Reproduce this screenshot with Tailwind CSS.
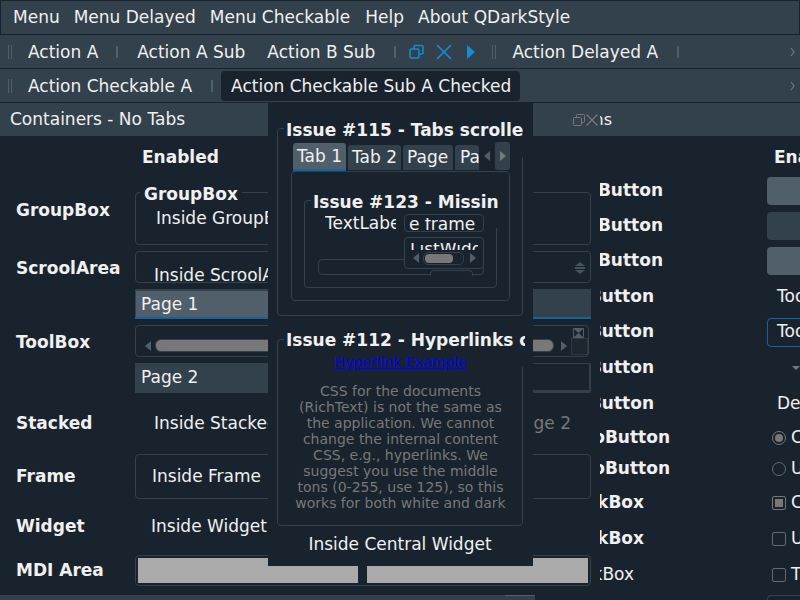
<!DOCTYPE html>
<html lang="en">
<head>
  <meta charset="UTF-8">
  <title>QDarkStyle Example</title>
  <script src="https://cdn.jsdelivr.net/npm/@tailwindcss/browser@4"></script>
</head>
<body class="w-[800px] h-[600px] overflow-hidden bg-[#19232D] text-[#F0F0F0] text-[17px] font-['DejaVu_Sans',sans-serif]">
  <div class="relative w-[800px] h-[600px] overflow-hidden whitespace-nowrap">
    <!-- Menu bar -->
    <div class="h-[35px] bg-[#32414B] border border-[#19232D] flex items-center pl-[12px] gap-[14px]">
      <span>Menu</span><span>Menu Delayed</span><span>Menu Checkable</span><span class="ml-[1px]">Help</span><span>About QDarkStyle</span>
    </div>

    <!-- Toolbar 1 -->
    <div class="h-[34px] bg-[#32414B] border-b border-[#19232D] flex items-center relative">
      <div class="ml-[8px] w-[4px] h-[14px] border-x border-[#505F69]"></div>
      <span class="ml-[16px] pt-[2px]">Action A</span>
      <div class="ml-[18px] w-[2px] h-[12px] bg-[#505F69]"></div>
      <span class="ml-[19px] pt-[2px]">Action A Sub</span>
      <span class="ml-[22px] pt-[2px]">Action B Sub</span>
      <div class="ml-[19px] w-[2px] h-[12px] bg-[#505F69]"></div>
      <svg class="ml-[13px]" width="16" height="16" viewBox="0 0 16 16" fill="none" stroke="#148CD2" stroke-width="1.5"><rect x="1" y="5" width="9" height="9" rx="1.5"/><path d="M5 5V2.500q0-1 1-1h7q1 0 1 1V9q0 1-1 1h-3"/></svg>
      <svg class="ml-[11px]" width="16" height="16" viewBox="0 0 16 16" fill="none" stroke="#148CD2" stroke-width="1.6"><path d="M1 1l14 14M15 1L1 15"/></svg>
      <svg class="ml-[14px]" width="10" height="14" viewBox="0 0 10 14"><path d="M1 0l8 7-8 7z" fill="#148CD2"/></svg>
      <div class="ml-[16px] w-[4px] h-[14px] border-x border-[#505F69]"></div>
      <span class="ml-[16px] pt-[2px]">Action Delayed A</span>
      <div class="ml-[19px] w-[2px] h-[12px] bg-[#505F69]"></div>
      <svg class="absolute left-[790px] top-[12px]" width="5" height="10" viewBox="0 0 5 10" fill="none" stroke="#787878" stroke-width="1.2"><path d="M1 1l3 4-3 4"/></svg>
    </div>

    <!-- Toolbar 2 -->
    <div class="h-[34px] bg-[#32414B] border-b border-[#19232D] flex items-center relative">
      <div class="ml-[8px] w-[4px] h-[14px] border-x border-[#505F69]"></div>
      <span class="ml-[16px] pt-[2px]">Action Checkable A</span>
      <div class="ml-[19px] w-[2px] h-[12px] bg-[#505F69]"></div>
      <span class="ml-[8px] h-[30px] pl-[10px] pr-[9px] pt-[2px] flex items-center rounded-[4px] bg-[#19232D]">Action Checkable Sub A Checked</span>
      <svg class="absolute left-[790px] top-[12px]" width="5" height="10" viewBox="0 0 5 10" fill="none" stroke="#787878" stroke-width="1.2"><path d="M1 1l3 4-3 4"/></svg>
    </div>

    <!-- Dock titles -->
    <div class="h-[33px] flex">
      <div class="w-[268px] bg-[#32414B] pl-[10px] pt-[1px] flex items-center">Containers - No Tabs</div>
      <div class="w-[265px]"></div>
      <div class="flex-1 bg-[#32414B] flex items-center relative">
        <svg class="absolute left-[40px] top-[11px]" width="12" height="12" viewBox="0 0 12 12" fill="none" stroke="#787878" stroke-width="1"><rect x="0.5" y="3.500" width="8" height="8" rx="1"/><path d="M3.500 3.500v-2q0-1 1-1h6q1 0 1 1v6q0 1-1 1h-2"/></svg>
        <svg class="absolute left-[53px] top-[11px]" width="12" height="12" viewBox="0 0 12 12" fill="none" stroke="#787878" stroke-width="1.2"><path d="M0.500 0.500l11 11M11.500 0.500l-11 11"/></svg>
        <div class="absolute left-[67px] w-[12px] overflow-hidden flex justify-end text-[16px]"><span>Buttons</span></div>
      </div>
    </div>

    <!-- Containers dock -->
    <div class="absolute left-0 top-[136px] w-[600px] h-[459px]">
      <div class="grid grid-cols-[135px_456px] grid-rows-[56px_53px_6px_32px_6px_104px_2px_57px_2px_45px_6px_43px_7px_31px]">
        <div class="col-span-2 pl-[142px] pt-[9px] font-bold">Enabled</div>

        <div class="pl-[16px] pt-[6px] font-bold">GroupBox</div>
        <div class="relative border border-[#32414B] rounded-[4px]">
          <span class="absolute left-[4px] -top-[9px] px-[4px] bg-[#19232D] font-bold leading-[20px]">GroupBox</span>
          <span class="absolute left-[20px] top-[15px] leading-[20px]">Inside GroupBox</span>
        </div>
        <div class="col-span-2"></div>

        <div class="pl-[16px] pt-[4px] font-bold flex items-center">ScroolArea</div>
        <div class="relative border border-[#32414B] rounded-[4px] overflow-hidden">
          <span class="absolute left-[18px] top-[13px] leading-[20px]">Inside ScroolArea</span>
          <svg class="absolute right-[4px] top-[10px]" width="12" height="12" viewBox="0 0 12 12"><path d="M6 0l5 4H1zM1 5h10v2H1zM1 8h10l-5 4z" fill="#455560"/></svg>
        </div>
        <div class="col-span-2"></div>

        <div class="pl-[16px] pt-[4px] font-bold flex items-center">ToolBox</div>
        <div class="relative">
          <div class="absolute left-0 right-0 top-0 h-[30px] bg-[#32414B] border-b-2 border-[#1464A0]"></div>
          <div class="absolute left-[1px] w-[300px] top-[2px] h-[28px] bg-[#505F69] border-b-2 border-[#1464A0] pl-[5px] pt-[2px] flex items-center">Page 1</div>
          <div class="absolute left-0 right-[2px] top-[36px] h-[32px] border border-[#32414B] rounded-[4px]">
            <svg class="absolute left-[9px] top-[15px]" width="6" height="10" viewBox="0 0 6 10"><path d="M6 0v10L0 5z" fill="#505F69"/></svg>
            <div class="absolute left-[19px] right-[34px] top-[13px] h-[13px] rounded-[6px] bg-[#787878] border border-[#32414B]"></div>
            <svg class="absolute right-[21px] top-[15px]" width="6" height="10" viewBox="0 0 6 10"><path d="M0 0v10l6-5z" fill="#505F69"/></svg>
            <div class="absolute right-0 top-[12px] w-[17px] h-[17px] border border-[#2C3A44] bg-[#1D2730]"></div>
            <svg class="absolute right-[4px] top-[2px]" width="11" height="10" viewBox="0 0 11 10" fill="none" stroke="#505F69"><path d="M0.500 0.500v9M10.500 0.500v9M0.500 0.500h10M0.500 9.500h10"/><path d="M1 1h9L5.500 5 10 9H1l4.500-4z" fill="#505F69" stroke="none"/></svg>
          </div>
          <div class="absolute left-0 right-0 top-[74px] h-[30px] border border-[#32414B] border-r-2 border-b-[3px] rounded-[2px]"></div>
          <div class="absolute left-0 top-[74px] w-[200px] h-[30px] bg-[#32414B] pl-[6px] flex items-center">Page 2</div>
        </div>
        <div class="col-span-2"></div>

        <div class="pl-[16px] font-bold flex items-center">Stacked</div>
        <div class="flex items-center pl-[19px] justify-between pr-[20px]"><span>Inside Stacked</span><span class="text-[#787878]">Page 2</span></div>
        <div class="col-span-2"></div>

        <div class="pl-[16px] font-bold flex items-center">Frame</div>
        <div class="border border-[#32414B] rounded-[4px] pl-[16px] flex items-center">Inside Frame</div>
        <div class="col-span-2"></div>

        <div class="pl-[16px] font-bold flex items-center">Widget</div>
        <div class="pl-[16px] flex items-center">Inside Widget</div>
        <div class="col-span-2"></div>

        <div class="pl-[16px] font-bold flex items-center">MDI Area</div>
        <div class="border border-[#32414B] rounded-[4px] p-[2px] flex gap-[9px]">
          <div class="w-[220px] bg-[#AAAAAA]"></div>
          <div class="w-[221px] bg-[#AAAAAA]"></div>
        </div>
      </div>
    </div>

    <!-- Buttons dock -->
    <div class="absolute left-[600px] top-[136px] w-[200px] h-[464px] overflow-hidden grid grid-cols-[167px_33px] grid-rows-[37px_35px_35px_35px_37px_34px_37px_36px_32px_30px_37px_36px_36px_7px] items-center">
      <div></div><div class="self-start pt-[9px] pl-[7px] font-bold">Enabled</div>

      <div class="flex justify-end overflow-hidden pr-[104px] font-bold">Button</div>
      <div class="h-[28px] w-[60px] bg-[#505F69] rounded-[4px]"></div>
      <div class="flex justify-end overflow-hidden pr-[104px] font-bold">Button</div>
      <div class="h-[28px] w-[60px] bg-[#32414B] rounded-[4px]"></div>
      <div class="flex justify-end overflow-hidden pr-[104px] font-bold">Button</div>
      <div class="h-[28px] w-[60px] bg-[#505F69] rounded-[4px]"></div>

      <div class="flex justify-end overflow-hidden pr-[113px] font-bold">ToolButton</div>
      <div class="pl-[10px]">ToolButton</div>
      <div class="flex justify-end overflow-hidden pr-[113px] font-bold">ToolButton</div>
      <div class="h-[29px] w-[60px] border border-[#1464A0] rounded-[4px] pl-[9px] flex items-center">ToolButton</div>
      <div class="flex justify-end overflow-hidden pr-[113px] font-bold">ToolButton</div>
      <div class="pl-[25px]"><svg width="8" height="4" viewBox="0 0 8 4"><path d="M0 0h8L4 4z" fill="#787878"/></svg></div>
      <div class="flex justify-end overflow-hidden pr-[113px] font-bold">ToolButton</div>
      <div class="pl-[10px]">Delayed</div>

      <div class="flex justify-end overflow-hidden pr-[97px] font-bold">RadioButton</div>
      <div class="flex items-center gap-[5px] pl-[5px]"><span class="shrink-0 w-[14px] h-[14px] rounded-full border border-[#787878] flex items-center justify-center"><span class="w-[8px] h-[8px] rounded-full bg-[#787878]"></span></span><span>Checked</span></div>
      <div class="flex justify-end overflow-hidden pr-[97px] font-bold">RadioButton</div>
      <div class="flex items-center gap-[5px] pl-[5px]"><span class="shrink-0 w-[14px] h-[14px] rounded-full border border-[#5F6B75]"></span><span>Unchecked</span></div>

      <div class="flex justify-end overflow-hidden pr-[123px] font-bold">CheckBox</div>
      <div class="flex items-center gap-[5px] pl-[5px]"><span class="shrink-0 w-[14px] h-[14px] rounded-[2px] border border-[#787878] flex items-center justify-center"><span class="w-[8px] h-[8px] bg-[#787878]"></span></span><span>Checked</span></div>
      <div class="flex justify-end overflow-hidden pr-[123px] font-bold">CheckBox</div>
      <div class="flex items-center gap-[5px] pl-[5px]"><span class="shrink-0 w-[14px] h-[14px] rounded-[2px] border border-[#5F6B75]"></span><span>Unchecked</span></div>
      <div class="flex justify-end overflow-hidden pr-[133px]">CheckBox</div>
      <div class="flex items-center gap-[5px] pl-[5px]"><span class="shrink-0 w-[14px] h-[14px] rounded-[2px] border border-[#5F6B75]"></span><span>Tristate</span></div>

      <div></div>
      <div class="self-end h-[5px] w-[60px] border-t border-l border-[#32414B] rounded-tl-[4px]"></div>
    </div>

    <!-- Bottom scrollbar -->
    <div class="absolute left-0 w-[535px] top-[595px] h-[5px] bg-[#32414B]">
      <div class="absolute left-[505px] top-0 w-[30px] h-[1px] bg-[#505F69]"></div>
    </div>

    <!-- Central widget -->
    <div class="absolute left-[268px] top-[103px] w-[265px] h-[463px] bg-[#19232D] flex flex-col items-start pl-[9px] pt-[25px]">
      <!-- Issue 115 group -->
      <div class="relative shrink-0 w-[246px] h-[188px] border border-[#32414B] rounded-[4px]">
        <div class="absolute left-[6px] -top-[1px] right-[-1px] h-[29px] bg-[#19232D]"></div>
        <div class="absolute left-[8px] -top-[9px] w-[237px] overflow-hidden font-bold leading-[20px] bg-[#19232D]">Issue #115 - Tabs scrolled</div>
        <div class="absolute left-[15px] top-[13px] h-[30px] flex items-end gap-[2px]">
          <div class="w-[53px] h-[29px] bg-[#505F69] border-b-[3px] border-[#1464A0] rounded-t-[3px] pl-[4px] leading-[26px]">Tab 1</div>
          <div class="w-[53px] h-[25px] mb-[2px] bg-[#32414B] rounded-t-[3px] pl-[4px] leading-[24px]">Tab 2</div>
          <div class="w-[50px] h-[25px] mb-[2px] bg-[#32414B] rounded-t-[3px] pl-[4px] leading-[24px]">Page</div>
          <div class="w-[24px] h-[25px] mb-[2px] bg-[#32414B] rounded-t-[3px] pl-[5px] leading-[24px] overflow-hidden">Page</div>
        </div>
        <svg class="absolute left-[206px] top-[22px]" width="6" height="10" viewBox="0 0 6 10"><path d="M6 0v10L0 5z" fill="#505F69"/></svg>
        <div class="absolute left-[217px] top-[13px] w-[15px] h-[28px] bg-[#32414B] rounded-[3px] flex items-center justify-center">
          <svg width="6" height="10" viewBox="0 0 6 10"><path d="M0 0v10l6-5z" fill="#787878"/></svg>
        </div>

        <!-- Tab pane -->
        <div class="absolute left-[13px] top-[42px] w-[219px] h-[130px] border border-[#32414B] rounded-[4px]">
          <!-- Issue 123 group -->
          <div class="absolute left-[12px] top-[28px] w-[193px] h-[88px] border border-[#32414B] rounded-[4px]">
            <div class="absolute left-[6px] -top-[1px] right-[-1px] h-[28px] bg-[#19232D]"></div>
            <div class="absolute left-[8px] -top-[9px] w-[185px] overflow-hidden font-bold leading-[20px] bg-[#19232D]">Issue #123 - Missing</div>
            <div class="absolute left-[20px] top-[12px] w-[71px] overflow-hidden leading-[20px]">TextLabel</div>
            <div class="absolute left-[13px] top-[58px] w-[166px] h-[16px] border border-[#32414B] rounded-[4px]"></div>
            <div class="absolute left-[125px] top-[69px] w-[43px] h-[6px] border border-[#32414B] border-b-0 rounded-t-[4px] bg-[#19232D]"></div>
            <div class="absolute left-[99px] top-[13px] w-[80px] h-[18px] border border-[#32414B] rounded-[4px]">
              <div class="absolute left-[4px] top-[3px] h-[13px] overflow-hidden"><span class="block -mt-[4px] leading-[20px]">e frame</span></div>
            </div>
            <div class="absolute left-[99px] top-[36px] w-[80px] h-[32px] border border-[#32414B] rounded-[4px] bg-[#19232D]">
              <div class="absolute left-[5px] top-[5px] h-[7px] w-[68px] overflow-hidden"><span class="block -mt-[4px] leading-[20px]">ListWidget</span></div>
              <svg class="absolute left-[8px] top-[15px]" width="6" height="10" viewBox="0 0 6 10"><path d="M6 0v10L0 5z" fill="#505F69"/></svg>
              <div class="absolute left-[18px] top-[14px] w-[41px] h-[13px] border border-[#32414B] rounded-[5px] p-[1px]">
                <div class="w-[28px] h-[9px] bg-[#787878] rounded-[4px]"></div>
              </div>
              <svg class="absolute left-[65px] top-[15px]" width="6" height="10" viewBox="0 0 6 10"><path d="M0 0v10l6-5z" fill="#505F69"/></svg>
            </div>
          </div>
        </div>
      </div>

      <!-- Issue 112 group -->
      <div class="relative shrink-0 mt-[23px] w-[246px] h-[187px] border border-[#32414B] rounded-[4px]">
        <div class="absolute left-[6px] -top-[1px] right-[-1px] h-[28px] bg-[#19232D]"></div>
        <div class="absolute left-[8px] -top-[10px] w-[239px] overflow-hidden font-bold leading-[20px] bg-[#19232D]">Issue #112 - Hyperlinks color</div>
        <div class="absolute left-0 w-full top-[14px] pl-[1px] text-center text-[14px] leading-[16px] text-[#0000FF] underline">Hyperlink Example</div>
        <p class="absolute left-0 w-full top-[43px] pl-[1px] text-center text-[14px] leading-[16px] text-[#787878]">CSS for the documents<br>(RichText) is not the same as<br>the application. We cannot<br>change the internal content<br>CSS, e.g., hyperlinks. We<br>suggest you use the middle<br>tons (0-255, use 125), so this<br>works for both white and dark</p>
      </div>
      <div class="w-[246px] text-center mt-[8px] leading-[20px]">Inside Central Widget</div>
    </div>
  </div>
</body>
</html>
